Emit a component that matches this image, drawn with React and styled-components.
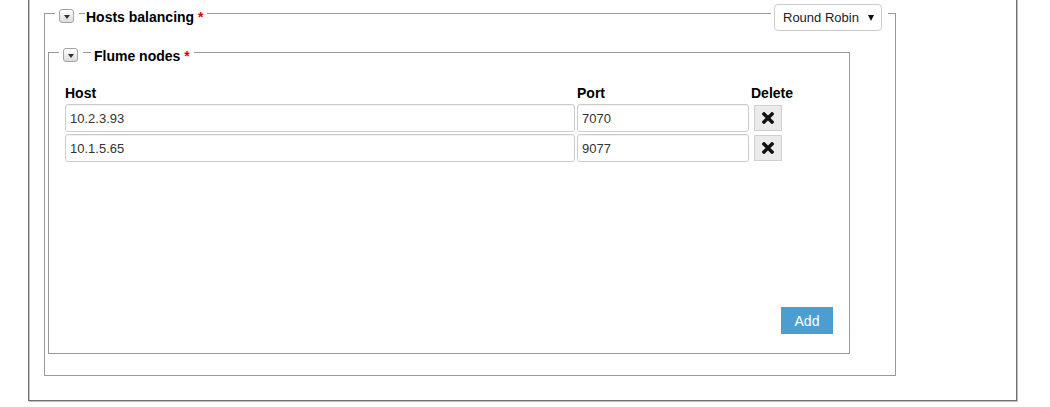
import React from 'react';
import styled, { createGlobalStyle } from 'styled-components';

const GlobalStyle = createGlobalStyle`
  html, body { margin: 0; padding: 0; background: #fff; }
  body {
    font-family: "Liberation Sans", Arial, Helvetica, sans-serif;
    color: #000;
    overflow: hidden;
  }
  *, *::before, *::after { box-sizing: border-box; }
`;

const Page = styled.div`
  width: 1050px;
  height: 407px;
  overflow: hidden;
`;

const OuterBox = styled.div`
  width: 989px;
  margin: -10px 0 0 28px;
  padding: 22px 0 24px 15px;
  border: 1px solid #707070;
  box-shadow: 1px 1px 0 #bdbdbd, inset 1px 0 0 #c4c4c4;
`;

const Panel = styled.div`
  width: ${(p) => p.$width}px;
  ${(p) => (p.$height ? `height: ${p.$height}px;` : '')}
  margin: ${(p) => p.$margin || '0'};
  padding: ${(p) => p.$padding || '0'};
  border: 1px solid #999;
  display: flex;
  flex-direction: column;
`;

const PanelHeader = styled.div`
  display: flex;
  align-items: flex-start;
  height: 27px;
  margin: -10px ${(p) => p.$mr || 0}px 0 ${(p) => p.$ml}px;
`;

const ToggleWrap = styled.div`
  display: flex;
  background: #fff;
  padding: 0 5px 0 4px;
  margin-top: 5px;
  margin-right: ${(p) => p.$gap}px;
`;

const ToggleButton = styled.button`
  width: 15px;
  height: 14px;
  padding: 0;
  border: 1px solid #a4a4a4;
  border-radius: 3px;
  background: linear-gradient(#ffffff, #dcdcdc);
  display: flex;
  align-items: center;
  justify-content: center;
  cursor: pointer;
`;

const Caret = styled.span`
  width: 0;
  height: 0;
  border-left: 3.5px solid transparent;
  border-right: 3.5px solid transparent;
  border-top: 4px solid #333;
  margin-top: 1px;
`;

const LegendText = styled.div`
  background: #fff;
  margin-top: 5px;
  padding: 0 4px 0 ${(p) => p.$pad}px;
  font-size: 14px;
  font-weight: bold;
  line-height: 16px;
  white-space: nowrap;
  color: #000;
`;

const Required = styled.span`
  color: #e00000;
`;

const SelectWrap = styled.div`
  margin-left: auto;
  background: #fff;
  padding: 0 6px 0 3px;
`;

const SelectBox = styled.div`
  width: 108px;
  height: 27px;
  border: 1px solid #cccccc;
  border-radius: 4px;
  background: #fff;
  display: flex;
  align-items: center;
  justify-content: space-between;
  padding: 0 7px 0 8px;
  font-size: 13px;
  color: #222;
`;

const SelectArrow = styled.span`
  width: 0;
  height: 0;
  border-left: 3.5px solid transparent;
  border-right: 3.5px solid transparent;
  border-top: 6px solid #111;
`;

const Grid = styled.div`
  display: grid;
  grid-template-columns: 510px 172px auto;
  column-gap: 2px;
  row-gap: 2px;
  margin: 14px 0 0 16px;
  width: max-content;
`;

const HeadCell = styled.div`
  font-size: 14px;
  font-weight: bold;
  line-height: 18px;
  color: #000;
`;

const TextInput = styled.input`
  width: 100%;
  height: 28px;
  margin: 0;
  padding: 0 4px;
  border: 1px solid #cccccc;
  border-radius: 3px;
  box-shadow: inset 0 1px 1px rgba(0, 0, 0, 0.06);
  font-family: "Liberation Sans", Arial, sans-serif;
  font-size: 13px;
  color: #333;
  background: #fff;
  outline: none;
`;

const DeleteCell = styled.div`
  display: flex;
  align-items: center;
  padding-left: 3px;
`;

const DeleteButton = styled.button`
  width: 28px;
  height: 26px;
  padding: 0;
  border: 1px solid #cfcfcf;
  background: #ebebeb;
  display: flex;
  align-items: center;
  justify-content: center;
  cursor: pointer;
`;

const Actions = styled.div`
  margin-top: auto;
  display: flex;
  justify-content: flex-end;
  padding-right: 16px;
`;

const AddButton = styled.button`
  width: 52px;
  height: 27px;
  border: none;
  background: #4b9fd0;
  color: #fff;
  font-family: "Liberation Sans", Arial, sans-serif;
  font-size: 14px;
  padding: 0;
  cursor: pointer;
`;

const XIcon = () => (
  <svg width="12" height="12" viewBox="0 0 12 12" aria-hidden="true">
    <path
      d="M2 2 L10 10 M10 2 L2 10"
      stroke="#111"
      strokeWidth="3.4"
      strokeLinecap="square"
      fill="none"
    />
  </svg>
);

const Legend = ({ label, gap, pad }) => (
  <>
    <ToggleWrap $gap={gap}>
      <ToggleButton type="button" aria-label="Collapse">
        <Caret />
      </ToggleButton>
    </ToggleWrap>
    <LegendText $pad={pad}>
      {label} <Required>*</Required>
    </LegendText>
  </>
);

const nodes = [
  { host: '10.2.3.93', port: '7070' },
  { host: '10.1.5.65', port: '9077' },
];

export default function App() {
  return (
    <Page>
      <GlobalStyle />
      <OuterBox>
        <Panel $width={852} $padding="0 0 21px 0">
          <PanelHeader $ml={10} $mr={7}>
            <Legend label="Hosts balancing" gap={6} pad={1} />
            <SelectWrap>
              <SelectBox>
                <span>Round Robin</span>
                <SelectArrow />
              </SelectBox>
            </SelectWrap>
          </PanelHeader>

          <Panel $width={802} $height={302} $margin="21px 0 0 3px" $padding="0 0 19px 0">
            <PanelHeader $ml={10}>
              <Legend label="Flume nodes" gap={8} pad={3} />
            </PanelHeader>
            <Grid>
              <HeadCell>Host</HeadCell>
              <HeadCell>Port</HeadCell>
              <HeadCell>Delete</HeadCell>
              {nodes.map((n) => (
                <React.Fragment key={n.host}>
                  <TextInput defaultValue={n.host} />
                  <TextInput defaultValue={n.port} />
                  <DeleteCell>
                    <DeleteButton type="button" aria-label="Delete">
                      <XIcon />
                    </DeleteButton>
                  </DeleteCell>
                </React.Fragment>
              ))}
            </Grid>
            <Actions>
              <AddButton type="button">Add</AddButton>
            </Actions>
          </Panel>
        </Panel>
      </OuterBox>
    </Page>
  );
}
